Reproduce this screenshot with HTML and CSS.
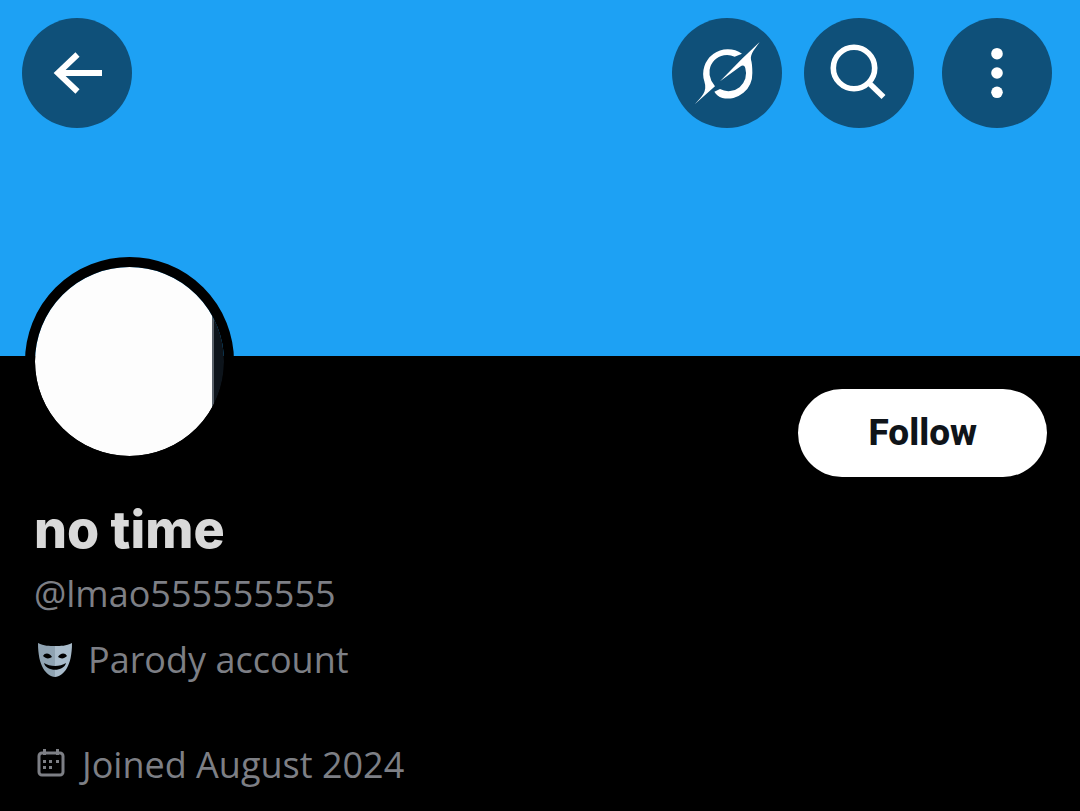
FILE: index.html
```html
<!DOCTYPE html>
<html lang="en">
<head>
    <meta charset="UTF-8">
    <meta name="viewport" content="width=device-width, initial-scale=1.0">
    <title>no time (@lmao555555555)</title>
    <link rel="stylesheet" href="styles.css">
</head>
<body>
    <header class="banner">
        <button class="icon-button" type="button" aria-label="Back">
            <svg viewBox="0 0 110 110" fill="none" stroke="#fff" stroke-width="6">
                <path d="M80 55H36M55.500 36.500L36 55L55.500 73.500"/>
            </svg>
        </button>
        <div class="banner-actions">
            <button class="icon-button" type="button" aria-label="Grok">
                <svg viewBox="21 23 330 330" fill="#fff">
                    <path d="M90 281C110 258 128 246 118 213A74 74 0 0 1 231 130L209 139A53 53 0 0 0 139 211L150 228Z"/>
                    <path d="M284 95C272 113 255 130 258 148Q262 160 262 188A74 74 0 0 1 172 263C161 259 153 252 148 244L165 236A53 53 0 0 0 241 174C239 165 234 163 225 169L165 213L231 145Z"/>
                </svg>
            </button>
            <button class="icon-button" type="button" aria-label="Search">
                <svg viewBox="0 0 110 110" fill="none" stroke="#fff" stroke-width="5.6">
                    <circle cx="50" cy="50" r="20.700"/>
                    <path d="M64.500 64.500L79.500 79"/>
                </svg>
            </button>
            <button class="icon-button more" type="button" aria-label="More options">
                <svg viewBox="0 0 110 110" fill="#fff">
                    <circle cx="55" cy="35.700" r="5.800"/>
                    <circle cx="55" cy="55" r="5.800"/>
                    <circle cx="55" cy="74.300" r="5.800"/>
                </svg>
            </button>
        </div>
    </header>

    <main class="profile">
        <div class="profile-top">
            <div class="avatar" role="img" aria-label="Profile photo"></div>
            <button class="follow" type="button">Follow</button>
        </div>

        <div class="details">
            <h1 class="name">no time</h1>
            <p class="handle">@lmao555555555</p>
            <p class="label">
                <svg class="mask" viewBox="0 0 36 36" aria-hidden="true">
                    <path fill="#8fa3b2" d="M1 1C7 4 12 4 18 4V35C9 34 1 24 1 1Z"/>
                    <path fill="#a9bccb" d="M18 4C24 4 29 4 35 1C35 24 27 34 18 35Z"/>
                    <path fill="#000" d="M6 14C8 10 13 11 15 15C12 17 9 17 6 14ZM21 15C23 11 28 10 30 14C27 17 24 17 21 15ZM7 21C13 25 23 25 29 21C27 30 9 30 7 21Z"/>
                </svg>
                Parody account
            </p>
            <p class="joined">
                <svg class="calendar" viewBox="0 0 28 28" aria-hidden="true">
                    <rect x="2" y="4" width="24" height="22" rx="3" fill="none" stroke="#7d7f85" stroke-width="3"/>
                    <path fill="#7d7f85" d="M6 0h3v6H6zM19 0h3v6h-3zM6 11h3v3H6zM12 11h3v3h-3zM19 11h3v3h-3zM6 17h3v3H6zM12 17h3v3h-3z"/>
                </svg>
                Joined August 2024
            </p>
        </div>
    </main>
</body>
</html>
```
FILE: styles.css
```css
* {
    box-sizing: border-box;
}

body {
    margin: 0;
    background-color: #000;
    color: #7d7f85;
    font-family: "Open Sans", "Noto Sans", sans-serif;
    font-size: 36px;
    line-height: 48px;
}

h1, p {
    margin: 0;
}

button {
    border: none;
    padding: 0;
    cursor: pointer;
}

/* Banner with the round buttons */
.banner {
    display: flex;
    justify-content: space-between;
    align-items: flex-start;
    min-height: 356px;
    padding: 18px 28px 0 22px;
    background-color: #1da1f4;
}

.banner-actions {
    display: flex;
    gap: 22px;
}

.icon-button {
    width: 110px;
    height: 110px;
    border-radius: 50%;
    background-color: #0f5079;
}

.icon-button svg {
    display: block;
    width: 100%;
}

.more {
    margin-left: 6px;
}

/* Avatar and follow button */
.profile-top {
    display: flex;
    justify-content: space-between;
    align-items: flex-start;
    padding: 0 33px 0 25px;
}

.avatar {
    width: 209px;
    height: 209px;
    margin-top: -99px;
    border: 10px solid #000;
    border-radius: 50%;
    background: linear-gradient(90deg, #fdfdfd 177px, #59616a 177px, #59616a 179px, #0d141b 179px) padding-box;
}

.follow {
    margin-top: 33px;
    padding: 20px 70px;
    border-radius: 44px;
    background-color: #fff;
    color: #0f1419;
    font-family: Roboto, sans-serif;
    font-size: 37px;
    font-weight: 800;
    line-height: 48px;
}

/* Account details */
.details {
    padding: 21px 34px 22px;
}

.name {
    color: #d9d9d9;
    font-family: Inter, sans-serif;
    font-size: 52px;
    font-weight: 800;
    line-height: 64px;
}

.handle {
    margin-top: 8px;
}

.label, .joined {
    display: flex;
    align-items: center;
}

.label {
    gap: 15px;
    margin-top: 18px;
}

.joined {
    gap: 17px;
    margin-top: 57px;
}

.mask {
    width: 36px;
    margin-left: 3px;
}

.calendar {
    width: 28px;
    margin: 0 0 4px 3px;
}
```
